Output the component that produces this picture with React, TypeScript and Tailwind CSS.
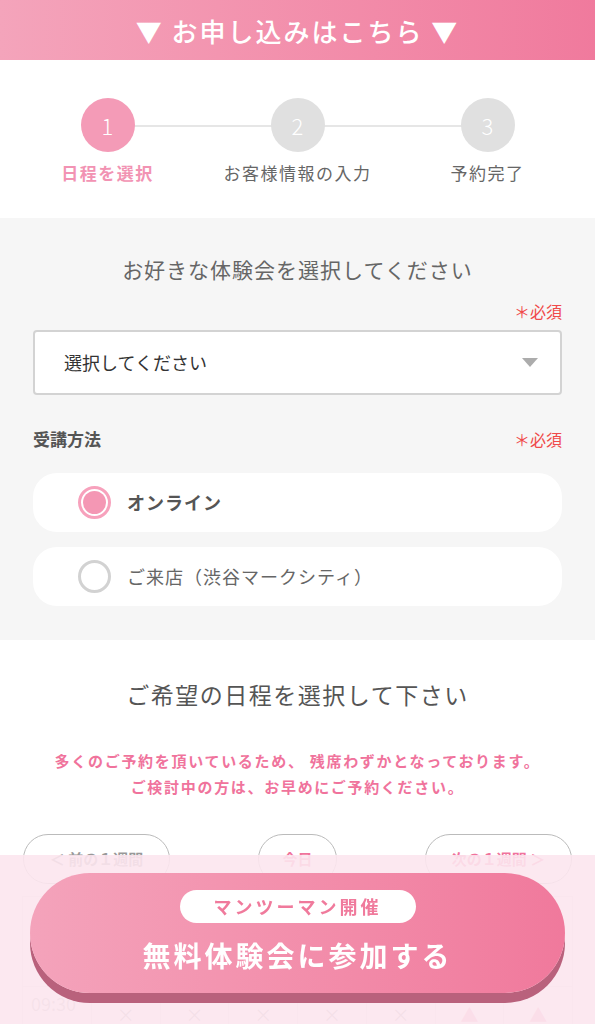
import React from "react";

const font = { fontFamily: '"Noto Sans CJK JP", "Noto Sans", sans-serif' };

const steps = [
  { n: "1", label: "日程を選択", active: true },
  { n: "2", label: "お客様情報の入力", active: false },
  { n: "3", label: "予約完了", active: false },
];

const days = [
  { d: "6/10", w: "月" },
  { d: "6/11", w: "火" },
  { d: "6/12", w: "水" },
  { d: "6/13", w: "木" },
  { d: "6/14", w: "金" },
  { d: "6/15", w: "土" },
  { d: "6/16", w: "日" },
];

const rows = [{ t: "09:30", marks: ["×", "×", "×", "×", "×", "▲", "▲"] }];

function Required() {
  return <span className="text-[16px] leading-[24px] text-[#f04a4a]">＊必須</span>;
}

function Radio({ checked, label }: { checked: boolean; label: string }) {
  return (
    <div className="flex h-[59px] items-center rounded-[24px] bg-white pl-[45px]">
      {checked ? (
        <span className="flex h-[33px] w-[33px] items-center justify-center rounded-full border-[3px] border-[#f7a1bc] bg-white">
          <span className="h-[23px] w-[23px] rounded-full bg-[#f497b4]" />
        </span>
      ) : (
        <span className="h-[33px] w-[33px] rounded-full border-[3px] border-[#d2d2d2] bg-white" />
      )}
      <span
        className={
          checked
            ? "ml-[16px] text-[18px] font-bold tracking-[1px] text-[#555]"
            : "ml-[16px] text-[18px] tracking-[1px] text-[#666]"
        }
      >
        {label}
      </span>
    </div>
  );
}

export default function App() {
  return (
    <div style={font} className="w-full bg-white">
      {/* header */}
      <div className="flex h-[60px] items-center justify-center bg-gradient-to-r from-[#f4a4bb] to-[#f07a9d]">
        <span className="text-[26px] font-medium tracking-[2px] text-white">▼ お申し込みはこちら ▼</span>
      </div>

      {/* steps */}
      <div className="h-[158px] bg-white pt-[38px]">
        <div className="relative mx-auto grid w-[570px] grid-cols-3">
          <div className="absolute left-[95px] right-[95px] top-[27px] h-[2px] bg-[#e6e6e6]" />
          {steps.map((s) => (
            <div key={s.n} className="relative flex flex-col items-center">
              <div
                className={
                  s.active
                    ? "flex h-[54px] w-[54px] items-center justify-center rounded-full bg-[#f49bb7] text-[22px] font-light text-white"
                    : "flex h-[54px] w-[54px] items-center justify-center rounded-full bg-[#e0e0e0] text-[22px] font-light text-white"
                }
              >
                {s.n}
              </div>
              <div
                className={
                  s.active
                    ? "mt-[9px] text-[17px] font-bold leading-[24px] tracking-[1.5px] text-[#f293b3]"
                    : "mt-[9px] text-[17px] leading-[24px] tracking-[1.5px] text-[#666]"
                }
              >
                {s.label}
              </div>
            </div>
          ))}
        </div>
      </div>

      {/* form */}
      <div className="bg-[#f6f6f6] px-[33px] pb-[34px] pt-[36px]">
        <div className="text-center text-[21px] leading-[30px] tracking-[1px] text-[#666]">
          お好きな体験会を選択してください
        </div>
        <div className="mt-[15px] flex justify-end">
          <Required />
        </div>
        <div className="mt-[7px] flex h-[65px] items-center justify-between rounded-[4px] border-2 border-[#d3d3d3] bg-white pl-[29px] pr-[22px]">
          <span className="text-[18px] text-[#333]">選択してください</span>
          <svg width="16" height="9" viewBox="0 0 16 9">
            <path d="M0 0 L16 0 L8 9 Z" fill="#acacac" />
          </svg>
        </div>
        <div className="mt-[32px] flex items-center justify-between">
          <span className="text-[17px] font-bold leading-[24px] text-[#555]">受講方法</span>
          <Required />
        </div>
        <div className="mt-[22px] flex flex-col gap-[15px]">
          <Radio checked label="オンライン" />
          <Radio checked={false} label="ご来店（渋谷マークシティ）" />
        </div>
      </div>

      {/* schedule */}
      <div className="bg-white pt-[38px]">
        <div className="text-center text-[23px] leading-[32px] tracking-[1.5px] text-[#555]">
          ご希望の日程を選択して下さい
        </div>
        <div className="mt-[38px] text-center text-[15px] font-bold leading-[26px] tracking-[1.7px] text-[#f0739c]">
          <div>多くのご予約を頂いているため、 残席わずかとなっております。</div>
          <div>ご検討中の方は、お早めにご予約ください。</div>
        </div>
        <div className="mx-[23px] mt-[34px] flex items-center justify-between">
          <button className="h-[50px] w-[147px] rounded-full border-[1.5px] border-[#bbb] text-[15px] font-bold text-[#999]">
            ＜ 前の１週間
          </button>
          <button className="h-[50px] w-[79px] rounded-full border-[1.5px] border-[#bbb] text-[15px] font-bold text-[#f0739c]">
            今日
          </button>
          <button className="h-[50px] w-[147px] rounded-full border-[1.5px] border-[#bbb] text-[15px] font-bold text-[#f0739c]">
            次の１週間 ＞
          </button>
        </div>
        <div className="mx-[22px] mt-[12px] border-l border-t border-[#e4e4e4]">
          <div className="grid h-[90px] grid-cols-8 border-b border-[#e4e4e4]">
            <div className="border-r border-[#e4e4e4]" />
            {days.map((d) => (
              <div
                key={d.d}
                className="flex flex-col items-center justify-center border-r border-[#e4e4e4] text-[14px] text-[#666]"
              >
                <span>{d.d}</span>
                <span>({d.w})</span>
              </div>
            ))}
          </div>
          {rows.map((r) => (
            <div key={r.t} className="grid h-[38px] grid-cols-8">
              <div className="border-r border-[#e4e4e4] pl-[8px] pt-[4px] text-[18px] leading-[24px] text-[#bbb]">
                {r.t}
              </div>
              {r.marks.map((m, i) => (
                <div
                  key={i}
                  className={
                    m === "×"
                      ? "flex items-end justify-center border-r border-[#e4e4e4] text-[18px] leading-[22px] text-[#aaa]"
                      : "flex items-end justify-center border-r border-[#e4e4e4] text-[18px] leading-[22px] text-[#f497b4]"
                  }
                >
                  {m}
                </div>
              ))}
            </div>
          ))}
        </div>
      </div>

      {/* fixed CTA */}
      <div className="fixed bottom-0 left-0 right-0 h-[169px] bg-[#fce6ee]/90 px-[30px] pt-[18px]">
        <button className="flex h-[120px] w-full flex-col items-center rounded-full bg-gradient-to-r from-[#f4a3bb] to-[#f0799c] pt-[17px] shadow-[0_10px_0_#b9617c]">
          <span className="flex h-[33px] w-[236px] items-center justify-center rounded-full bg-white text-[18px] font-bold tracking-[3px] text-[#f07a9c]">
            マンツーマン開催
          </span>
          <span className="mt-[12px] text-[28px] font-bold leading-[40px] tracking-[3px] text-white">
            無料体験会に参加する
          </span>
        </button>
      </div>
    </div>
  );
}
